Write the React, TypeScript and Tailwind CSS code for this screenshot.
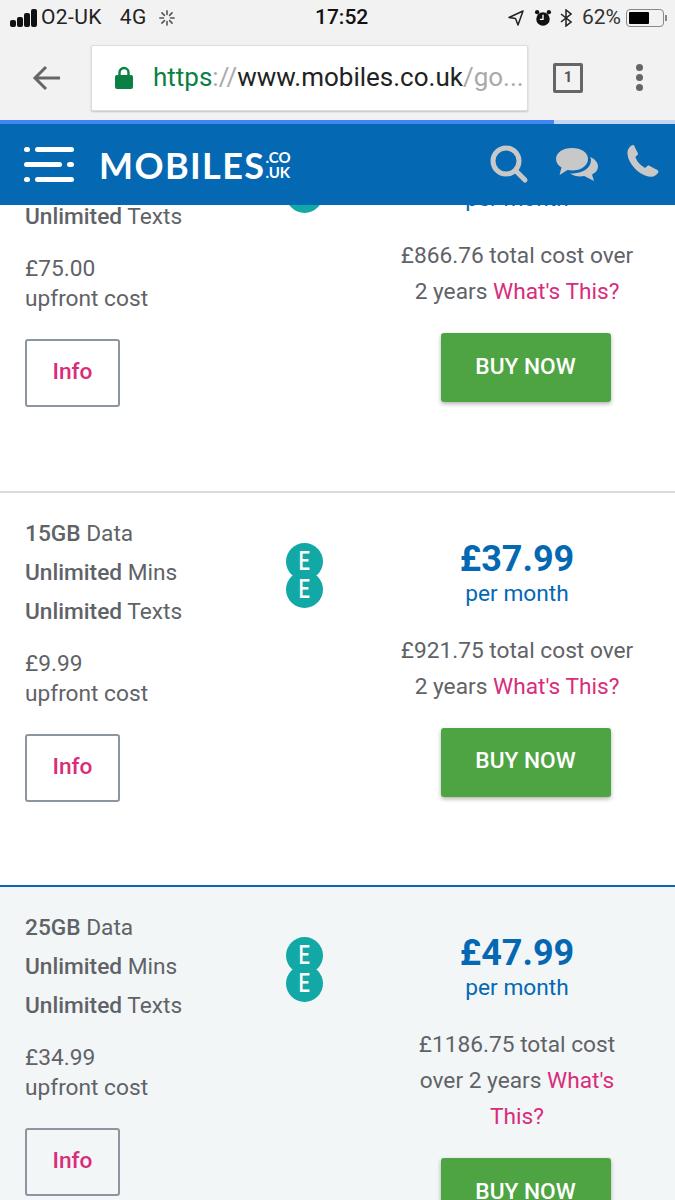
import React from "react";

const font = { fontFamily: "Roboto, sans-serif" };

function EELogo() {
  return (
    <div className="relative w-[37px] h-[65px] shrink-0">
      <div className="absolute left-0 top-0 w-[37px] h-[37px] rounded-full bg-[#12a8a5] flex items-center justify-center text-white text-[25px] leading-none font-medium"><span className="block scale-x-[0.8]">E</span></div>
      <div className="absolute left-0 top-[28px] w-[37px] h-[37px] rounded-full bg-[#12a8a5] flex items-center justify-center text-white text-[25px] leading-none font-medium"><span className="block scale-x-[0.8]">E</span></div>
    </div>
  );
}

type CardProps = {
  data: string;
  upfront: string;
  price: string;
  total: React.ReactNode;
  className: string;
};

function Card({ data, upfront, price, total, className }: CardProps) {
  return (
    <section className={`flex h-[394.5px] shrink-0 border-t-2 ${className}`}>
      <div className="w-[286px] shrink-0 pl-[25px] pt-[21px] text-[22.7px] text-[#5f6368]">
        <p className="h-[39px] leading-[39px]"><b className="font-medium">{data}</b> Data</p>
        <p className="h-[39px] leading-[39px]"><b className="font-medium">Unlimited</b> Mins</p>
        <p className="h-[39px] leading-[39px]"><b className="font-medium">Unlimited</b> Texts</p>
        <p className="mt-[18px] leading-[30px] h-[30px]">{upfront}</p>
        <p className="leading-[30px] h-[30px]">upfront cost</p>
        <button className="mt-[25px] block w-[95px] h-[68px] pb-[1px] bg-transparent rounded-[3px] border-2 border-[#8b96a0] text-[#d92c7a] font-medium text-[22.7px]">Info</button>
      </div>
      <div className="pt-[50px]"><EELogo /></div>
      <div className="w-[264px] shrink-0 ml-[62px] px-[12px] pt-[42px] text-center">
        <p className="text-[36px] leading-[48px] font-bold text-[#0568b3]">{price}</p>
        <p className="text-[22.7px] leading-[24px] text-[#0568b3] mt-[-1px]">per month</p>
        <p className="mt-[27px] text-[22.7px] leading-[36px] text-[#5f6368]">{total}</p>
        <button className="mt-[23px] ml-[17px] w-[170px] h-[69px] pb-[1px] bg-[#4ea442] rounded-[3px] text-white text-[22.7px] font-medium shadow-[0_2px_4px_rgba(0,0,0,0.3)]">BUY NOW</button>
      </div>
    </section>
  );
}

const What = ({ children }: { children: React.ReactNode }) => <span className="text-[#d92c7a]">{children}</span>;

export default function App() {
  return (
    <div style={font} className="w-[675px] h-[1200px] overflow-hidden flex flex-col bg-white">
      <div className="h-[120px] shrink-0 bg-[#f2f2f2] flex flex-col">
        <div className="h-[35px] flex items-center pl-[10px] pr-[8px] relative text-[#222] text-[21px]">
          <svg width="27" height="18" viewBox="0 0 27 18" fill="#111" className="mr-[4px]">
            <rect x="0" y="11" width="6" height="7" rx="2" />
            <rect x="7" y="8" width="6" height="10" rx="2" />
            <rect x="14" y="4" width="6" height="14" rx="2" />
            <rect x="21" y="0" width="6" height="18" rx="2" />
          </svg>
          <span className="tracking-[0.4px]">O2-UK</span>
          <span className="ml-[18px] tracking-[0.4px]">4G</span>
          <svg width="16" height="16" viewBox="0 0 18 18" stroke="#555" strokeWidth="1.8" strokeLinecap="round" className="ml-[12px]">
            <path d="M9 1v4M9 13v4M1 9h4M13 9h4M3.300 3.300l2.800 2.800M11.900 11.900l2.800 2.800M3.300 14.700l2.800-2.800M11.900 6.100l2.800-2.800" />
          </svg>
          <span className="absolute left-[315px] font-medium text-[#111]">17:52</span>
          <div className="ml-auto flex items-center">
            <svg width="16" height="16" viewBox="0 0 16 16" fill="none" stroke="#222" strokeWidth="1.5" strokeLinejoin="round">
              <path d="M15 1 1 7.500l6.500 1L10 15z" />
            </svg>
            <svg width="18" height="18" viewBox="0 0 20 20" className="ml-[10px]">
              <circle cx="10" cy="11" r="7.500" fill="#111" />
              <circle cx="3.500" cy="3.500" r="2.400" fill="#111" />
              <circle cx="16.500" cy="3.500" r="2.400" fill="#111" />
              <path d="M10 6.500V11.500H6.500" stroke="#fff" strokeWidth="1.500" fill="none" />
            </svg>
            <svg width="12" height="18" viewBox="0 0 12 18" fill="none" stroke="#222" strokeWidth="1.500" className="ml-[8px]">
              <path d="M1 5l10 8-5 4V1l5 4-10 8" />
            </svg>
            <span className="ml-[10px] text-[#333]">62%</span>
            <div className="ml-[5px] w-[38px] h-[18px] rounded-[4px] border border-[#888] p-[2px]">
              <div className="w-[20px] h-full bg-black rounded-[1px]" />
            </div>
            <div className="w-[2px] h-[6px] bg-[#888] ml-[1px]" />
          </div>
        </div>
        <div className="flex items-center h-[85px]">
          <div className="w-[91px] shrink-0 flex justify-center pl-[1px]">
            <svg width="28" height="26" viewBox="0 0 28 26" fill="none" stroke="#666" strokeWidth="3">
              <path d="M28 13H3M14 2 3 13l11 11" />
            </svg>
          </div>
          <div className="w-[437px] h-[66px] bg-white rounded-[2px] border border-[#ddd] shadow-[0_1px_2px_rgba(0,0,0,0.2)] flex items-center pl-[23px] text-[26px] whitespace-nowrap overflow-hidden">
            <svg width="18" height="24" viewBox="0 0 18 24" className="shrink-0 mr-[20px]">
              <path d="M4.500 10V6.500a4.500 4.500 0 0 1 9 0V10" fill="none" stroke="#0a8043" strokeWidth="2.400" />
              <rect x="0" y="9" width="18" height="14" rx="2" fill="#0a8043" />
            </svg>
            <span className="text-[#0a8043]">https</span>
            <span className="text-[#aaa]">://</span>
            <span className="text-[#222]">www.mobiles.co.uk</span>
            <span className="text-[#aaa]">/go...</span>
          </div>
          <div className="ml-[25px] w-[30px] h-[30px] border-[3px] border-[#666] rounded-[2px] flex items-center justify-center text-[15px] font-bold text-[#555]">1</div>
          <div className="ml-[53px] flex flex-col gap-[3px]">
            <span className="w-[7px] h-[7px] rounded-full bg-[#666]" />
            <span className="w-[7px] h-[7px] rounded-full bg-[#666]" />
            <span className="w-[7px] h-[7px] rounded-full bg-[#666]" />
          </div>
        </div>
      </div>
      <div className="h-[4px] shrink-0 bg-[#c5d5f2]">
        <div className="w-[554px] h-full bg-[#4285f4]" />
      </div>
      <header className="h-[81px] shrink-0 bg-[#0568b3] flex items-center relative z-10">
        <svg width="50" height="36" viewBox="0 0 50 36" fill="#fff" className="ml-[24px] mt-[1px]">
          <rect x="0" y="0" width="6" height="5" rx="2.500" />
          <rect x="11" y="0" width="39" height="5" rx="2.500" />
          <rect x="0" y="15" width="38" height="5" rx="2.500" />
          <rect x="43" y="15" width="7" height="5" rx="2.500" />
          <rect x="0" y="30" width="6" height="5" rx="2.500" />
          <rect x="11" y="30" width="39" height="5" rx="2.500" />
        </svg>
        <div className="ml-[25px] flex items-center text-white font-['Lato',sans-serif]">
          <span className="text-[36px] font-bold leading-none tracking-[1.4px]">MOBILES</span>
          <span className="flex flex-col text-[15px] font-bold leading-[15px] mt-[1px]">
            <span>.CO</span>
            <span>.UK</span>
          </span>
        </div>
        <div className="ml-auto flex items-center">
          <svg width="40" height="40" viewBox="0 0 40 40" fill="none" stroke="#c8c8c8" strokeWidth="5" strokeLinecap="round" className="mr-[2px] mb-[2px]">
            <circle cx="17" cy="17" r="13" />
            <path d="M27 27l9 9" />
          </svg>
          <svg width="42" height="34" viewBox="0 0 42 34" fill="#c8c8c8" className="ml-[25px]">
            <path d="M16 0C7 0 0 4.500 0 11c0 3.500 2 6.500 5.500 8.500L3.500 27l8-5c1.500.3 3 .5 4.500.5 9 0 16-4.800 16-11.500S25 0 16 0z" />
            <path d="M34 9c.6 1 1 2 1 3 0 7.500-7.500 13-18 13.500-1 0-2 0-3-.1 3 2 6.500 3 10.500 3 1.200 0 2.500-.1 3.700-.4L38 33l-2-6.500c3.700-1.800 6-4.500 6-8 0-4-3-7.400-8-9.500z" />
          </svg>
          <svg width="36" height="36" viewBox="0 0 24 24" fill="#c8c8c8" className="ml-[26px] mr-[15px] mb-[7px]">
            <path d="M6.600 1.500 9.500 7.300 7.600 9.400c.9 2.800 3.400 5.700 6.400 7.200l2.200-1.800 6 3.200c.8.500.9 1.200.5 1.900-1 1.700-2.900 2.800-4.900 2.600C10.500 21.700 3.100 14.500 2.300 7.100 2.100 4.800 3.200 2.900 5 1.700c.6-.400 1.200-.500 1.600-.200z" />
          </svg>
        </div>
      </header>
      <main className="flex-1 overflow-hidden">
        <div className="mt-[-109px]">
          <Card
            data=""
            upfront="£75.00"
            price={"\u00a0"}
            total={<>£866.76 total cost over 2 years <What>What's This?</What></>}
            className="bg-white border-transparent"
          />
          <Card
            data="15GB"
            upfront="£9.99"
            price="£37.99"
            total={<>£921.75 total cost over 2 years <What>What's This?</What></>}
            className="bg-white border-[#d9d9d9]"
          />
          <Card
            data="25GB"
            upfront="£34.99"
            price="£47.99"
            total={<>£1186.75 total cost over 2 years <What>What's This?</What></>}
            className="bg-[#f3f6f7] border-[#0568b3]"
          />
        </div>
      </main>
    </div>
  );
}
